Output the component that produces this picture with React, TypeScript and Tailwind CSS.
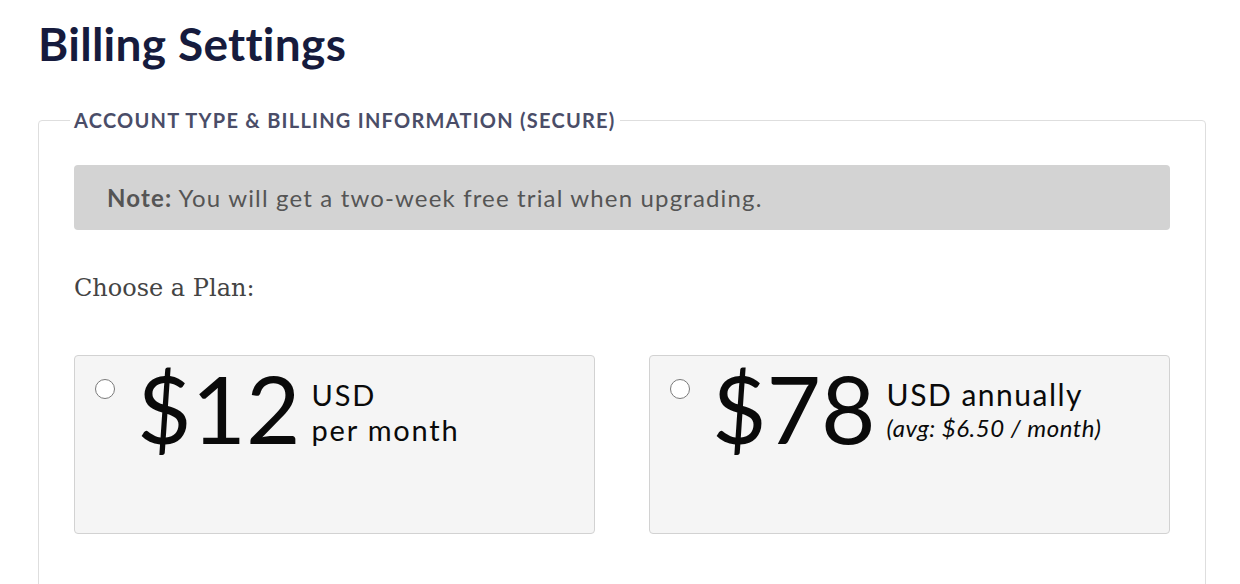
import React from 'react';

const sans = { fontFamily: 'Lato, "Noto Sans", sans-serif' };

const PlanCard = ({ price, line1, line2, italic }: { price: string; line1: string; line2: string; italic?: boolean }) => (
  <label className="flex-1 h-[179px] bg-[#f5f5f5] border border-[#d2d2d2] rounded-[4px] pl-[20px] pt-[5px] flex items-start cursor-pointer">
    <span className="mt-[18px] w-[20px] h-[20px] rounded-full border border-[#7a7a7a] bg-white shrink-0" />
    <span className="ml-[22px] text-[94px] leading-none text-[#0a0a0a]">{price}</span>
    {italic ? (
      <span className="ml-[11px] mt-[17px] flex flex-col text-[#0a0a0a]">
        <span className="text-[30px] leading-[32px] tracking-[1.5px]">{line1}</span>
        <span className="text-[24px] leading-[32px] italic tracking-[0.5px] mt-[2px]">{line2}</span>
      </span>
    ) : (
      <span className="ml-[11px] mt-[16px] flex flex-col text-[29px] leading-[35px] tracking-[1.8px] text-[#0a0a0a]">
        <span>{line1}</span>
        <span>{line2}</span>
      </span>
    )}
  </label>
);

export default function App() {
  return (
    <div className="min-h-screen bg-white pl-[38px] pr-[34px] pt-[14px]" style={sans}>
      <h1 className="text-[46px] leading-[60px] font-bold tracking-[0.3px] text-[#161b3d]">Billing Settings</h1>

      <fieldset className="mt-[34px] border border-[#dedede] rounded-[4px] px-[35px] pt-[33px] pb-[80px]">
        <legend className="ml-[-4px] px-[4px] text-[20px] leading-[24px] font-bold uppercase tracking-[1.25px] text-[#4a4d68]">
          Account Type &amp; Billing Information (Secure)
        </legend>

        <div className="h-[65px] bg-[#d3d3d3] rounded-[4px] pl-[33px] flex items-center text-[24px] tracking-[1.15px] text-[#555555]">
          <span>
            <strong className="font-bold">Note:</strong> You will get a two-week free trial when upgrading.
          </span>
        </div>

        <p className="mt-[42px] text-[24px] leading-[32px] text-[#444444]" style={{ fontFamily: '"DejaVu Serif", serif' }}>
          Choose a Plan:
        </p>

        <div className="mt-[51px] flex gap-[54px]">
          <PlanCard price="$12" line1="USD" line2="per month" />
          <PlanCard price="$78" line1="USD annually" line2="(avg: $6.50 / month)" italic />
        </div>
      </fieldset>
    </div>
  );
}
